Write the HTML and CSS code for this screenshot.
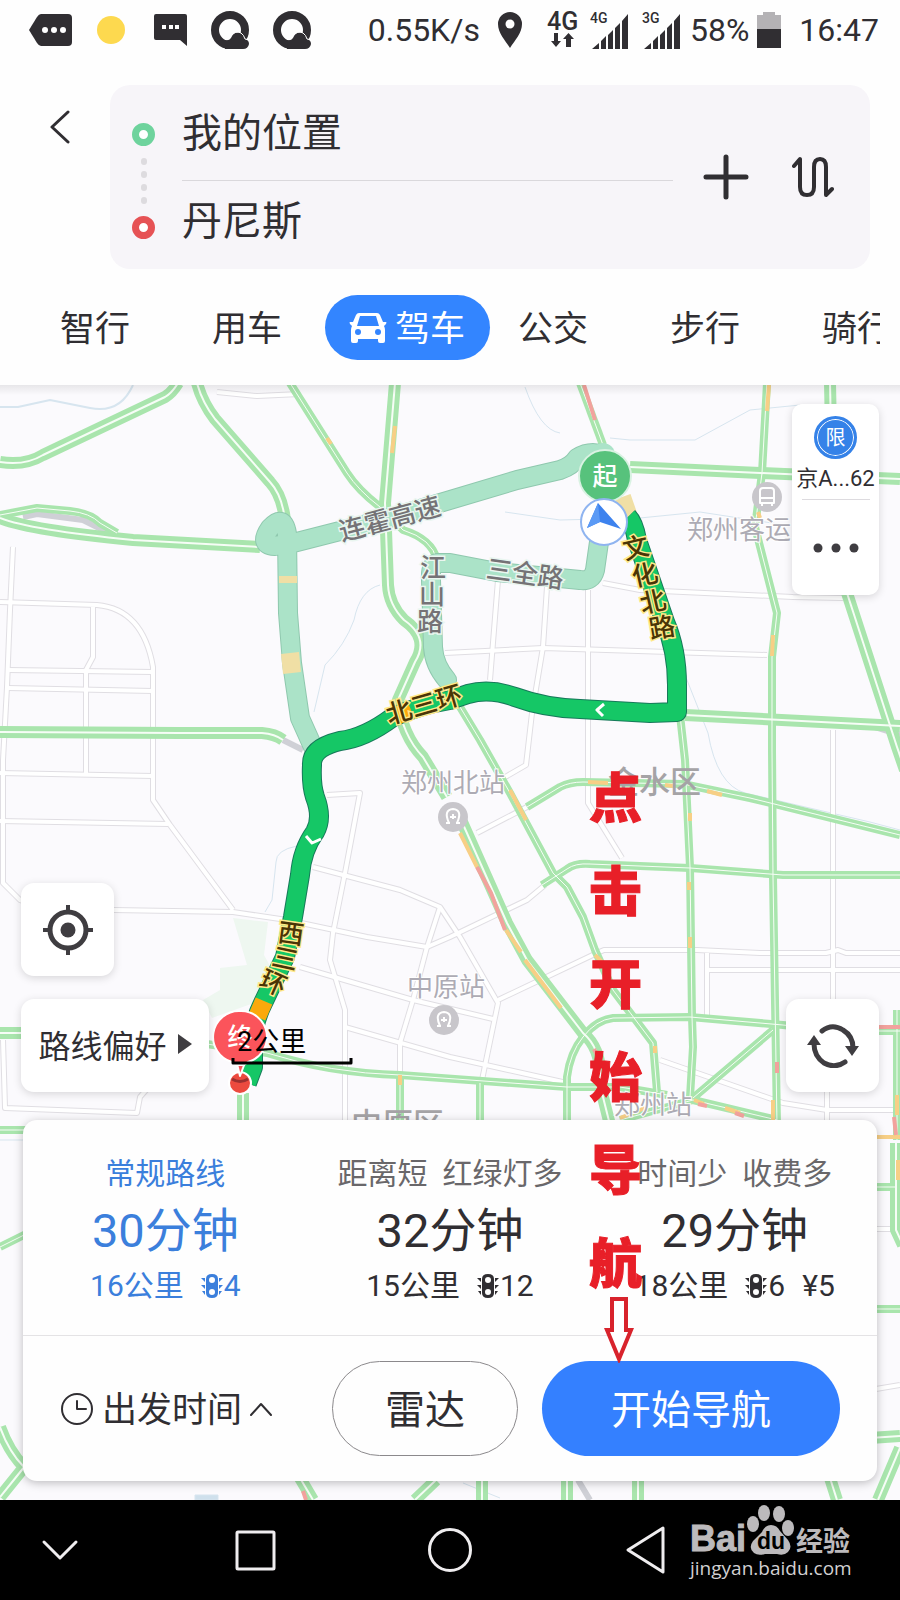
FILE: index.html
```
<!DOCTYPE html>
<html lang="zh-CN">
<head>
    <meta charset="UTF-8">
    <meta name="viewport" content="width=device-width, initial-scale=1.0">
    <title>路线规划</title>
    <link rel="stylesheet" href="styles.css">
</head>
<body>

    <div class="status-bar">
        <div class="status-left">
            <svg width="44" height="32" viewBox="0 0 44 32"><path d="M12 0H39a4 4 0 0 1 4 4V28a4 4 0 0 1-4 4H12Q10 32 8 29L0 16L8 3Q10 0 12 0Z" fill="#302e32"/><g fill="#fff"><circle cx="16" cy="16" r="3"/><circle cx="25" cy="16" r="3"/><circle cx="34" cy="16" r="3"/></g></svg>
            <svg width="28" height="28" viewBox="0 0 28 28"><circle cx="14" cy="14" r="14" fill="#fdd94f"/></svg>
            <svg width="38" height="32" viewBox="0 0 38 32"><path d="M7 0H36a2 2 0 0 1 2 2V32L31 26H7a2 2 0 0 1-2-2V2a2 2 0 0 1 2-2Z" fill="#302e32"/><path d="M13 11h4v4h-4zM20 11h4v4h-4zM26 11h4v4h-4z" fill="#fff"/></svg>
            <svg width="38" height="38" viewBox="0 0 38 38"><circle cx="19" cy="19" r="15" fill="none" stroke="#302e32" stroke-width="8"/><path d="M14 38V29Q18 30 20 27Q23 20 30 22Q33 24 34 28Q38 29 38 33Q37 38 32 38Z" fill="#302e32"/><path d="M20 25Q24 19 30 22Q33 24 34 28L38 29" fill="none" stroke="#fff" stroke-width="1"/></svg>
            <svg width="38" height="38" viewBox="0 0 38 38"><circle cx="19" cy="19" r="15" fill="none" stroke="#302e32" stroke-width="8"/><path d="M14 38V29Q18 30 20 27Q23 20 30 22Q33 24 34 28Q38 29 38 33Q37 38 32 38Z" fill="#302e32"/><path d="M20 25Q24 19 30 22Q33 24 34 28L38 29" fill="none" stroke="#fff" stroke-width="1"/></svg>
        </div>
        <div class="status-right">
            <span>0.55K/s</span>
            <svg width="50" height="36" viewBox="0 0 50 36"><path d="M22 0a12 12 0 0 1 12 12C34 21 27 28 22 36C17 28 10 21 10 12A12 12 0 0 1 22 0Z" fill="#302e32"/><circle cx="22" cy="12" r="4.500" fill="#fff"/></svg>
            <svg width="36" height="38" viewBox="0 0 36 38"><text x="1" y="19" class="net-big">4G</text><path d="M8 22h4v8h3l-5 6L5 30h3zM20 36h5v-8h3l-5.500-6L17 28h3z" fill="#302e32"/></svg>
            <svg width="44" height="38" viewBox="0 0 44 38"><text x="0" y="12" class="net-small">4G</text><path d="M2 38L9 32V38ZM11 30L16 25V38H11ZM18 24L23 19V38H18ZM25 17L30 12V38H25ZM32 10L38 3V38H32Z" fill="#302e32"/></svg>
            <svg width="40" height="38" viewBox="0 0 40 38"><text x="0" y="12" class="net-small">3G</text><path d="M2 38L9 32V38ZM11 30L16 25V38H11ZM18 24L23 19V38H18ZM25 17L30 12V38H25ZM32 10L38 3V38H32Z" fill="#302e32"/></svg>
            <span>58%</span>
            <svg width="34" height="36" viewBox="0 0 34 36"><path d="M6 0H18V3H24V17H0V3H6Z" fill="#b4b2b5"/><path d="M0 17H24V36H0Z" fill="#302e32"/></svg>
            <span>16:47</span>
        </div>
    </div>

    <header class="header">
        <div class="search-row">
            <button type="button" class="icon-btn back-btn" aria-label="返回">
                <svg width="20" height="34" viewBox="0 0 20 34"><path d="M18 2L2 17L18 32" class="line-icon" stroke-width="3"/></svg>
            </button>
            <div class="search-box">
                <div class="dots">
                    <i class="dot start"></i>
                    <i class="step"></i><i class="step"></i><i class="step"></i><i class="step"></i>
                    <i class="dot end"></i>
                </div>
                <div class="fields">
                    <input type="text" value="我的位置" aria-label="起点">
                    <input type="text" value="丹尼斯" aria-label="终点">
                </div>
                <button type="button" class="icon-btn" aria-label="添加途经点">
                    <svg width="46" height="46" viewBox="0 0 46 46"><path d="M23 3V43M3 23H43" class="line-icon" stroke-width="5"/></svg>
                </button>
                <button type="button" class="icon-btn" aria-label="交换起终点">
                    <svg width="42" height="42" viewBox="0 0 42 42"><path d="M2 10L8 3V31Q8 39 15 39Q22 39 22 31V11Q22 3 28 3Q34 3 34 11V39L40 33" class="line-icon" stroke-width="4"/></svg>
                </button>
            </div>
        </div>
        <nav class="tabs">
            <button type="button" class="tab">智行</button>
            <button type="button" class="tab">用车</button>
            <button type="button" class="tab active">
                <svg width="38" height="32" viewBox="0 0 38 32"><path d="M10 1H28Q30 1 31 3L34 10H37Q38 10 37 12L35 14Q36 16 36 18V29Q36 31 34 31H31Q29 31 29 29V27H9V29Q9 31 7 31H4Q2 31 2 29V18Q2 16 3 14L1 12Q0 10 1 10H4L7 3Q8 1 10 1ZM11 4L8 14H30L27 4Z" fill="#fff" fill-rule="evenodd"/><circle cx="9" cy="20" r="3" fill="#3385ff"/><circle cx="29" cy="20" r="3" fill="#3385ff"/></svg>
                驾车
            </button>
            <button type="button" class="tab">公交</button>
            <button type="button" class="tab">步行</button>
            <button type="button" class="tab">骑行</button>
        </nav>
    </header>

    <main class="map">
        <svg class="map-canvas" viewBox="0 385 900 1115" preserveAspectRatio="xMidYMin slice">
            <defs>
                <g id="streets">
                    <path d="M13 547L10 610L7 687L3 760V883L20 900L60 914"/>
                    <path d="M0 602L97 605Q143 609 153 667V800L170 825L233 910"/>
                    <path d="M93 607V657L86 670V775"/>
                    <path d="M8 670L153 672M8 688L153 691M0 773L153 776M0 821L168 824"/>
                    <path d="M113 910L233 912L287 920L367 937L427 947L450 937L527 900L545 885"/>
                    <path d="M327 795L360 793L345 873L333 933L330 960L345 1010V1120"/>
                    <path d="M313 867L400 890L440 907L460 937L498 1003L482 1080"/>
                    <path d="M440 907L427 947L413 1000L400 1043V1080"/>
                    <path d="M300 967L413 1000L493 1019M345 1027L450 1057L567 1083"/>
                    <path d="M477 833L527 807M498 1000L597 953L604 950H697L760 953H826L838 950L846 953H900"/>
                    <path d="M707 953V1015M707 970H900M833 730V1000M827 1080V1120"/>
                    <path d="M588 590V803L622 858"/>
                    <path d="M603 583L640 590L793 597L843 598M445 653L543 648L767 655"/>
                    <path d="M498 580L490 680M547 587L543 647L532 713L526 765L500 780"/>
                    <path d="M660 1060L783 1103L827 1110H900"/>
                    <path d="M3 1040L5 1108L137 1113L140 1097L155 1080"/>
                    <path d="M217 392L257 396L300 394M870 1390L900 1385M877 1229H900"/>
                </g>
                <g id="major">
                    <path d="M0 462Q25 466 43 455L165 397Q172 393 178 383"/>
                    <path d="M197 383Q202 402 215 419L270 482Q282 495 285 520"/>
                    <path d="M0 518Q30 530 133 540L260 547"/>
                    <path d="M395 383L385 503L388 585Q389 605 404 620Q430 638 415 662L398 700Q402 735 423 757L447 797"/>
                    <path d="M0 732L180 733H262Q275 734 283 740"/>
                    <path d="M630 467L760 473L900 479"/>
                    <path d="M830 383L832 480L847 593L897 747L905 770"/>
                    <path d="M685 715L900 726M243 1093V1125M0 1033H30"/>
                    <path d="M462 822L507 923L527 960L583 1033Q603 1050 600 1085L610 1125"/>
                    <path d="M482 1480V1500M567 1480V1500M638 1480V1500M830 1478L837 1500M900 1448L878 1500"/>
                    <path d="M300 1478L313 1500M436 1480L415 1500M0 1497L25 1466M0 1427Q9 1452 24 1467"/>
                    <path d="M896 1143V1230L903 1245M870 1438L900 1436"/>
                </g>
                <g id="minor">
                    <path d="M290 383L347 473Q358 490 380 507L403 530Q432 539 437 560"/>
                    <path d="M580 383L603 445"/>
                    <path d="M767 383L762 473L755 527L777 613L772 657V750L773 877L777 1125"/>
                    <path d="M680 715L685 760L690 867L692 1017L693 1047L690 1097"/>
                    <path d="M460 707L480 740L510 793L553 873L567 887L583 917L595 950L613 990L653 1043L657 1092"/>
                    <path d="M527 807L560 787Q570 782 583 782L683 784L750 798L900 835"/>
                    <path d="M542 885L567 869Q575 863 590 864L690 868L783 875H900"/>
                    <path d="M567 1125V1077Q570 1053 583 1037Q596 1020 613 1018L690 1017L783 1025L810 1028"/>
                    <path d="M200 1043L267 1053Q330 1073 400 1075L567 1087H620L667 1095"/>
                    <path d="M693 1098L773 1030M480 1083V1125M400 1078V1125M620 1120L693 1100L777 1120"/>
                    <path d="M870 1031H900M870 1309H900M0 1247L30 1232M0 1130H30M870 1187H896M897 1010V1140"/>
                    <path d="M0 515L37 508L70 511Q90 513 100 523L117 533"/>
                </g>
                <g id="alt-routes">
                    <path d="M603 455Q590 450 577 458Q572 466 560 470L517 480L450 500L383 520L293 543L275 546Q258 545 270 528Q284 513 287 534L288 613L292 663L300 718L313 747"/>
                    <path d="M600 535L595 570Q592 582 580 580L497 572L450 563H437Q430 565 431 580L433 647Q434 665 447 680"/>
                </g>
                <path id="main-route" d="M628 517Q634 523 637 540L665 622Q677 650 677 685V712L650 713L580 709Q545 708 515 697Q490 688 468 694L450 700Q420 705 393 717Q365 738 340 741Q311 748 312 765Q311 785 315 797Q323 818 315 832Q302 850 300 875L293 917L285 957L263 1003Q252 1025 253 1045V1067L247 1083"/>
            </defs>

            <g fill="#eef7f0">
                <path d="M233 918L268 922L264 955L275 975L262 1000L212 1018L203 1000L220 990V968L247 965Z"/>
            </g>
            <g class="water">
                <path d="M0 407H18L50 400L90 408Q120 414 133 385" stroke-width="2"/>
                <path d="M525 387Q540 430 560 433M610 438L630 440H695L750 410L800 405"/>
                <path d="M505 512L560 520L640 518L700 512L785 525"/>
                <path d="M380 585Q360 590 354 620Q345 645 325 665L314 712M297 846Q276 850 276 862L272 900L265 912"/>
                <path d="M685 675L708 733Q717 785 745 793L870 822L900 830"/>
                <path d="M195 1500V1495H218V1500Z" fill="#cfe0ec"/>
                <path d="M0 1140H23M463 1483L500 1498"/>
            </g>
            <path d="M23 517L37 514L83 520L107 532M283 740L303 750M578 1480L590 1500M868 725L900 735" class="dim-road"/>

            <use href="#streets" class="street-edge"/>
            <use href="#streets" class="street"/>
            <use href="#minor" class="minor-road"/>
            <use href="#major" class="major-road"/>
            <use href="#minor" class="mid-line"/>
            <use href="#major" class="mid-line wide"/>

            <g class="slow">
                <path d="M395 426L392 453M327 438L331 444M769 385L767 411M773 635L772 656M758 512L760 518"/>
                <path d="M460 833L477 867M506 930L521 952M525 960L561 1008M510 790L526 820M588 782L608 783M665 785L673 786M707 791L722 795"/>
                <path d="M690 813V821M689 882V890M690 937V948M655 1046V1053M595 955L602 962M400 1075V1085M773 1100V1120"/>
                <path d="M694 1100L704 1104M725 1108L740 1113M620 1118L645 1108M877 1137H900M897 1095V1115M898 1160V1180"/>
            </g>
            <g class="jam">
                <path d="M584 385L595 420M477 867L491 893L505 930M594 1049L597 1055M777 1062V1073M698 1104L707 1106M735 1113L744 1116M878 1027H900M894 1117L896 1135M303 1491L306 1500"/>
            </g>

            <g class="station">
                <circle cx="453" cy="817" r="15"/>
                <circle cx="444" cy="1020" r="15"/>
                <circle cx="767" cy="497" r="15"/>
            </g>
            <g class="station-mark">
                <path d="M449 823Q443 810 453 809Q463 810 457 823M446 823H450M456 823H460M453 814V819M450 817H456"/>
                <path d="M440 1026Q434 1013 444 1012Q454 1013 448 1026M437 1026H441M447 1026H451M444 1017V1022M441 1020H447"/>
                <path d="M760 503V491Q760 488 763 488H771Q774 488 774 491V503ZM760 498H774M762 503V506M772 503V506"/>
            </g>
            <g class="place">
                <text x="401" y="792">郑州北站</text>
                <text x="407" y="996">中原站</text>
                <text x="614" y="1114">郑州站</text>
                <text x="687" y="539">郑州客运</text>
            </g>
            <g class="district">
                <text x="608" y="793">金水区</text>
                <text x="351" y="1135">中原区</text>
            </g>

            <use href="#alt-routes" class="alt-edge"/>
            <use href="#alt-routes" class="alt-route"/>
            <circle cx="603" cy="455" r="12" fill="#abe3c8"/>
            <path d="M288 576V583M290 653L292 673M622 497L630 520" class="alt-slow"/>
            <use href="#main-route" class="route-edge"/>
            <use href="#main-route" class="route"/>
            <path d="M396 716L411 710M264 1001L257 1017" class="route-slow"/>
            <path d="M604 704L597 710L603 716M306 836L312 843L321 839" class="route-arrow"/>

            <g class="road-name faded">
                <text transform="translate(390 519) rotate(-15)" y="9">连霍高速</text>
                <text transform="translate(525 574) rotate(8)" y="9">三全路</text>
                <text x="433" y="577">江</text>
                <text x="432" y="604">山</text>
                <text x="430" y="631">路</text>
            </g>
            <g class="road-name">
                <text transform="translate(636 548) rotate(-13)" y="9">文</text>
                <text transform="translate(645 575) rotate(-13)" y="9">化</text>
                <text transform="translate(653 602) rotate(-13)" y="9">北</text>
                <text transform="translate(662 628) rotate(-10)" y="9">路</text>
                <text transform="translate(424 705) rotate(-16)" y="9">北三环</text>
                <text transform="translate(291 934) rotate(8)" y="9">西</text>
                <text transform="translate(285 959) rotate(12)" y="9">三</text>
                <text transform="translate(273 983) rotate(24)" y="9">环</text>
            </g>

            <circle cx="605" cy="476" r="26" fill="#57c27c" stroke="#d9f2e2" stroke-width="2"/>
            <text x="605" y="485" class="pin-text">起</text>
            <circle cx="604" cy="522" r="23" fill="#fff" stroke="#8fb4f0" stroke-width="2"/>
            <path d="M598 503L621 529L600 522L587 528Z" fill="#3d82ee"/>
            <path d="M598 503L600 522L587 528Z" fill="#5b9af5"/>

            <circle cx="240" cy="1083" r="11" fill="#ec4a3f" stroke="#fff" stroke-width="2"/>
            <path d="M232 1079Q240 1084 248 1079" stroke="#9c3030" stroke-width="3" fill="none"/>
            <path d="M236 1060L240 1076L246 1060Z" fill="#fb545b" stroke="#fff" stroke-width="2"/>
            <path d="M240 1011A26 26 0 0 1 248 1062L244 1065H236L232 1062A26 26 0 0 1 240 1011Z" fill="#fb545b" stroke="#fff" stroke-width="2"/>
            <text x="240" y="1046" class="pin-text">终</text>
            <text x="237" y="1051" class="scale-text">2公里</text>
            <path d="M233 1058V1063H351V1058" fill="none" stroke="#000" stroke-width="3"/>
        </svg>

        <aside class="car-card">
            <span class="limit">限</span>
            <span class="plate">京A...62</span>
            <button type="button" class="icon-btn more-btn" aria-label="更多">
                <svg width="46" height="10" viewBox="0 0 46 10"><g fill="#3f3d41"><circle cx="5" cy="5" r="4.500"/><circle cx="23" cy="5" r="4.500"/><circle cx="41" cy="5" r="4.500"/></g></svg>
            </button>
        </aside>

        <div class="map-controls">
            <button type="button" class="map-btn" aria-label="定位">
                <svg width="50" height="50" viewBox="0 0 50 50"><g fill="none" stroke="#3f3d41" stroke-width="5"><circle cx="25" cy="25" r="18"/><path d="M25 0V8M25 42V50M0 25H8M42 25H50" stroke-width="4"/></g><circle cx="25" cy="25" r="7.500" fill="#3f3d41"/></svg>
            </button>
            <div class="control-row">
                <button type="button" class="map-btn prefer-btn">路线偏好
                    <svg width="14" height="20" viewBox="0 0 14 20"><path d="M0 0L14 10L0 20Z" fill="#3f3d41"/></svg>
                </button>
                <button type="button" class="map-btn" aria-label="刷新">
                    <svg width="52" height="44" viewBox="0 0 52 44"><g fill="none" stroke="#3f3d41" stroke-width="5" stroke-linecap="round"><path d="M15 7Q25 -1 36 6Q46 12 46 24"/><path d="M38 38Q28 45 17 39Q7 32 7 20"/></g><path d="M38 22H52L45 32ZM0 21H14L7 11Z" fill="#3f3d41"/></svg>
                </button>
            </div>
        </div>

        <section class="panel">
            <div class="routes">
                <button type="button" class="route-option selected">
                    <span class="route-tags"><span>常规路线</span></span>
                    <span class="route-time">30分钟</span>
                    <span class="route-info"><span>16公里</span><span><svg width="22" height="24" viewBox="0 0 22 24"><use href="#lights"/></svg>4</span></span>
                </button>
                <button type="button" class="route-option">
                    <span class="route-tags"><span>距离短</span><span>红绿灯多</span></span>
                    <span class="route-time">32分钟</span>
                    <span class="route-info"><span>15公里</span><span><svg width="22" height="24" viewBox="0 0 22 24"><use href="#lights"/></svg>12</span></span>
                </button>
                <button type="button" class="route-option">
                    <span class="route-tags"><span>时间少</span><span>收费多</span></span>
                    <span class="route-time">29分钟</span>
                    <span class="route-info"><span>18公里</span><span><svg width="22" height="24" viewBox="0 0 22 24"><use href="#lights"/></svg>6</span><span>¥5</span></span>
                </button>
            </div>
            <div class="actions">
                <button type="button" class="depart-btn">
                    <svg width="34" height="34" viewBox="0 0 34 34"><circle cx="17" cy="17" r="15" class="line-icon" stroke-width="2"/><path d="M17 9V17H26" class="line-icon" stroke-width="2"/></svg>
                    <span>出发时间</span>
                    <svg width="22" height="14" viewBox="0 0 22 14"><path d="M1 13L11 2L21 13" class="line-icon" stroke-width="2"/></svg>
                </button>
                <button type="button" class="pill-btn">雷达</button>
                <button type="button" class="pill-btn primary">开始导航</button>
            </div>
        </section>

        <div class="hint">
            点击开始导航
            <svg width="30" height="66" viewBox="0 0 30 66"><path d="M8 2H22V33H27L15 62L3 33H8Z" fill="#fff" stroke="#d8232c" stroke-width="4"/></svg>
        </div>
    </main>

    <footer class="nav-bar">
        <button type="button" class="icon-btn" aria-label="收起"><svg width="44" height="44" viewBox="0 0 44 44"><path d="M6 14L22 30L38 14"/></svg></button>
        <button type="button" class="icon-btn" aria-label="最近任务"><svg width="44" height="44" viewBox="0 0 44 44"><rect x="4" y="4" width="37" height="37" rx="1"/></svg></button>
        <button type="button" class="icon-btn" aria-label="主页"><svg width="44" height="44" viewBox="0 0 44 44"><circle cx="22" cy="22" r="20.500"/></svg></button>
        <button type="button" class="icon-btn" aria-label="返回上一页"><svg width="44" height="48" viewBox="0 0 44 48"><path d="M40 2V46L5 24Z"/></svg></button>
        <div class="watermark">
            <div class="brand">
                <span class="brand-bai">Bai</span>
                <svg width="48" height="52" viewBox="0 0 48 52"><g fill="#bcbabc"><ellipse cx="6" cy="20" rx="6" ry="8"/><ellipse cx="17" cy="9" rx="6" ry="8"/><ellipse cx="32" cy="10" rx="6" ry="8"/><ellipse cx="41" cy="24" rx="6" ry="8"/><path d="M24 21Q30 21 33 27L41 36Q46 43 41 48Q37 52 30 50H18Q11 52 7 49Q1 44 6 37L15 28Q18 21 24 21Z"/></g><text x="24" y="45" class="brand-du">du</text></svg>
                <span class="brand-cn">经验</span>
            </div>
            <a href="#">jingyan.baidu.com</a>
        </div>
    </footer>

    <svg width="0" height="0" class="sprite" aria-hidden="true">
        <defs>
            <g id="lights">
                <path fill="currentColor" fill-rule="evenodd" d="M11 0Q17 0 17 5V19Q17 24 11 24Q5 24 5 19V5Q5 0 11 0ZM11 3a3 3 0 1 0 0 6a3 3 0 1 0 0-6ZM11 15a3 3 0 1 0 0 6a3 3 0 1 0 0-6Z"/>
                <path fill="currentColor" d="M0 4H4V8ZM22 4H18V8ZM0 11H4V15ZM22 11H18V15ZM1 17H4V21ZM21 17H18V21Z"/>
            </g>
        </defs>
    </svg>

</body>
</html>
```
FILE: styles.css
```
* {
    box-sizing: border-box;
}

body {
    margin: 0;
    min-height: 100vh;
    display: flex;
    flex-direction: column;
    background: #fefefe;
    color: #302e32;
    font-family: Roboto, "Noto Sans CJK SC", sans-serif;
}

button, input {
    font: inherit;
    color: inherit;
    background: none;
    border: none;
    padding: 0;
    margin: 0;
}

button {
    cursor: pointer;
}

svg {
    display: block;
    flex: none;
}

.sprite {
    position: absolute;
}

.icon-btn {
    display: flex;
    align-items: center;
    justify-content: center;
}

.line-icon {
    fill: none;
    stroke: #302e32;
    stroke-linecap: round;
    stroke-linejoin: round;
}

/* status bar */
.status-bar {
    height: 60px;
    padding: 0 21px 0 29px;
    display: flex;
    align-items: center;
    justify-content: space-between;
    font-size: 32px;
}

.status-left {
    display: flex;
    align-items: center;
    gap: 24px;
}

.status-right {
    display: flex;
    align-items: center;
    gap: 8px;
}

.net-big {
    font-size: 25px;
    font-weight: 500;
    fill: #302e32;
}

.net-small {
    font-size: 14px;
    font-weight: 500;
    fill: #302e32;
}

/* header */
.header {
    padding: 25px 20px 25px 50px;
    display: flex;
    flex-direction: column;
    gap: 26px;
}

.search-row {
    display: flex;
    padding-right: 10px;
    gap: 40px;
}

.back-btn {
    width: 20px;
    height: 84px;
}

.search-box {
    flex: 1;
    height: 184px;
    padding: 8px 36px 0 22px;
    display: flex;
    align-items: center;
    border-radius: 20px;
    background: #f7f5f9;
}

.dots {
    width: 23px;
    display: flex;
    flex-direction: column;
    align-items: center;
    gap: 6px;
}

.dot {
    width: 23px;
    height: 23px;
    border: 7px solid #6ed39d;
    border-radius: 50%;
    background: #fff;
    margin-bottom: 6px;
}

.dot.end {
    border-color: #e65255;
    margin: 6px 0 0;
}

.step {
    width: 6px;
    height: 7px;
    border-radius: 3px;
    background: #dddbdf;
}

.fields {
    flex: 1;
    min-width: 0;
    margin: 0 30px 0 27px;
}

.fields input {
    display: block;
    width: 100%;
    height: 88px;
    padding-bottom: 14px;
    font-size: 40px;
}

.fields input:first-child {
    border-bottom: 1px solid #dad8dc;
}

.search-box .icon-btn {
    padding-bottom: 8px;
}

.search-box .icon-btn:last-child {
    margin-left: 43px;
}

.tabs {
    display: flex;
    height: 65px;
    padding-left: 10px;
    overflow: hidden;
    font-size: 35px;
    white-space: nowrap;
}

.tab {
    flex: none;
    padding-bottom: 4px;
    margin-right: 82px;
}

.tab.active {
    display: flex;
    align-items: center;
    gap: 8px;
    padding: 0 25px 4px 24px;
    margin: 0 28px 0 -39px;
    border-radius: 33px;
    background: #3385ff;
    color: #fff;
}

.tab.active svg {
    margin-top: 4px;
}

/* map */
.map {
    flex: 1;
    position: relative;
    display: flex;
    flex-direction: column;
    padding: 19px 21px;
    background: #fbfafd;
}

.map::before {
    content: "";
    position: absolute;
    z-index: 1;
    top: 0;
    left: 0;
    right: 0;
    height: 10px;
    background: linear-gradient(rgba(0, 0, 0, 0.08), transparent);
}

.map-canvas {
    position: absolute;
    top: 0;
    left: 0;
    width: 100%;
    height: 100%;
}

.map-canvas path {
    stroke-linejoin: round;
}

.street-edge, .street, .minor-road, .major-road, .mid-line,
.alt-edge, .alt-route, .alt-slow, .route-edge, .route, .route-slow,
.route-arrow, .water, .dim-road, .slow, .jam, .station-mark {
    fill: none;
}

.street-edge { stroke: #e0dee3; stroke-width: 6px; }
.street { stroke: #fff; stroke-width: 4px; }
.minor-road { stroke: #a9e5ad; stroke-width: 8px; }
.major-road { stroke: #a9e5ad; stroke-width: 12px; }
.mid-line { stroke: #f6fdf6; stroke-width: 1px; }
.mid-line.wide { stroke-width: 2px; }
.water { stroke: #d7e5ef; stroke-width: 1px; }
.dim-road { stroke: #cfd0d6; stroke-width: 6px; }
.slow { stroke: #f7cf86; stroke-width: 4px; }
.jam { stroke: #f2a29d; stroke-width: 4px; }

.alt-edge { stroke: #8fc8ae; stroke-width: 20px; stroke-linecap: round; }
.alt-route { stroke: #abe3c8; stroke-width: 18px; stroke-linecap: round; }
.alt-slow { stroke: #f0dfa5; stroke-width: 18px; }
.route-edge { stroke: #17795a; stroke-width: 20px; }
.route { stroke: #15c766; stroke-width: 18px; }
.route-slow { stroke: #fba90b; stroke-width: 18px; }
.route-arrow { stroke: #fff; stroke-width: 3px; }

.station { fill: #c8c6cb; }
.station-mark { stroke: #fff; stroke-width: 2px; }

.place {
    font-size: 26px;
    fill: #adabb4;
    stroke: #fff;
    stroke-width: 2px;
    paint-order: stroke;
}

.district {
    font-size: 31px;
    font-weight: 500;
    fill: #a5a3a6;
}

.road-name {
    font-size: 26px;
    font-weight: 500;
    text-anchor: middle;
    fill: #4a3506;
    stroke: #ffe98a;
    stroke-width: 3px;
    paint-order: stroke;
}

.road-name.faded {
    fill: #757376;
    stroke: #eaf6f0;
}

.pin-text {
    font-size: 25px;
    font-weight: 500;
    text-anchor: middle;
    fill: #fff;
}

.scale-text {
    font-size: 27px;
    fill: #000;
}

.car-card {
    position: relative;
    align-self: flex-end;
    width: 87px;
    height: 191px;
    padding-top: 12px;
    display: flex;
    flex-direction: column;
    align-items: center;
    border-radius: 10px;
    background: #fff;
    box-shadow: 0 2px 8px rgba(0, 0, 0, 0.15);
}

.limit {
    width: 43px;
    height: 43px;
    padding-bottom: 2px;
    display: flex;
    align-items: center;
    justify-content: center;
    border: 3px solid #3582e8;
    border-radius: 50%;
    background: #3582e8;
    box-shadow: inset 0 0 0 1px #fff;
    color: #fff;
    font-size: 20px;
}

.plate {
    margin: 8px 0;
    line-height: 24px;
    font-size: 22px;
}

.more-btn {
    flex: 1;
    width: 68px;
    border-top: 1px solid #dddbdf;
}

.map-controls {
    position: relative;
    margin-top: auto;
    padding-top: 40px;
    display: flex;
    flex-direction: column;
    gap: 23px;
}

.map-btn {
    width: 93px;
    height: 93px;
    display: flex;
    align-items: center;
    justify-content: center;
    border-radius: 13px;
    background: #fff;
    box-shadow: 0 2px 8px rgba(0, 0, 0, 0.15);
}

.control-row {
    display: flex;
    justify-content: space-between;
}

.prefer-btn {
    width: 188px;
    padding-bottom: 4px;
    gap: 11px;
    font-size: 32px;
}

/* route panel */
.panel {
    position: relative;
    margin: 28px 2px 0;
    border-radius: 14px;
    background: #fefefe;
    box-shadow: 0 2px 10px rgba(0, 0, 0, 0.25);
}

.routes {
    display: grid;
    grid-template-columns: repeat(3, 1fr);
    height: 216px;
    border-bottom: 1px solid #e4e3e5;
}

.route-option {
    display: flex;
    flex-direction: column;
    align-items: center;
    padding-top: 33px;
    white-space: nowrap;
}

.route-option.selected,
.route-option.selected .route-tags {
    color: #3b7fdc;
}

.route-tags {
    display: flex;
    gap: 15px;
    color: #69676a;
    font-size: 30px;
    line-height: 42px;
}

.route-time {
    font-size: 47px;
    line-height: 72px;
}

.route-info {
    display: flex;
    gap: 17px;
    font-size: 30px;
    line-height: 38px;
}

.route-info span {
    display: flex;
    align-items: center;
    gap: 1px;
}

.actions {
    display: flex;
    align-items: center;
    height: 145px;
    padding: 0 37px;
    gap: 24px;
}

.depart-btn {
    display: flex;
    align-items: center;
    gap: 8px;
    margin-right: auto;
    font-size: 35px;
}

.depart-btn span {
    padding-bottom: 4px;
}

.pill-btn {
    width: 186px;
    height: 95px;
    padding-bottom: 4px;
    border: 1px solid #8b898c;
    border-radius: 48px;
    font-size: 40px;
}

.pill-btn.primary {
    width: 298px;
    border: none;
    background: #3480ff;
    color: #fff;
}

/* red callout lying over the map and the panel */
.hint {
    position: absolute;
    top: 364px;
    left: 589px;
    width: 54px;
    color: #e81f28;
    font-family: "Noto Sans CJK SC", sans-serif;
    font-size: 53px;
    font-weight: 900;
    -webkit-text-stroke: 1px #e81f28;
    line-height: 93px;
    word-break: break-all;
    pointer-events: none;
}

.hint svg {
    margin: -10px 0 0 15px;
}

/* system navigation */
.nav-bar {
    position: relative;
    height: 100px;
    padding-left: 38px;
    display: flex;
    align-items: center;
    gap: 151px;
    background: #000;
}

.nav-bar .icon-btn svg {
    fill: none;
    stroke: #efedef;
    stroke-width: 3px;
    stroke-linejoin: round;
    stroke-linecap: round;
}

.watermark {
    position: absolute;
    top: 4px;
    right: 48px;
    width: 162px;
    color: #bcbabc;
}

.watermark a {
    display: block;
    color: #d2d0d2;
    font-family: "Open Sans", sans-serif;
    font-size: 19px;
    line-height: 24px;
    text-decoration: none;
}

.brand {
    display: flex;
    align-items: flex-end;
    gap: 1px;
}

.brand-bai {
    font-family: "Liberation Sans", sans-serif;
    font-size: 36px;
    font-weight: 700;
    line-height: 34px;
    -webkit-text-stroke: 1px #bcbabc;
}

.brand-du {
    font-family: "Liberation Sans", sans-serif;
    font-size: 23px;
    font-weight: 700;
    text-anchor: middle;
    fill: #000;
}

.brand-cn {
    font-family: "Noto Sans CJK SC", sans-serif;
    font-size: 27px;
    font-weight: 700;
    line-height: 32px;
}
```
